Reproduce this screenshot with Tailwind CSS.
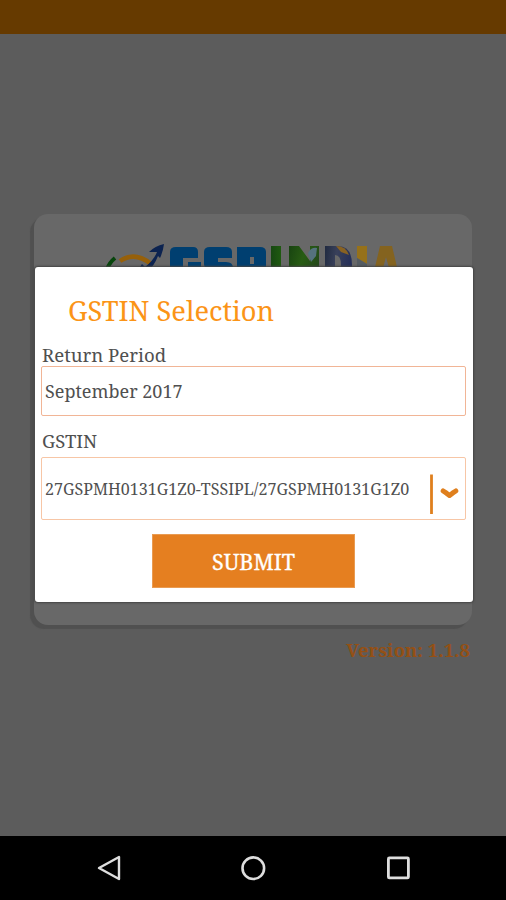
<!DOCTYPE html>
<html lang="en">
<head>
<meta charset="utf-8">
<title>GSTIN Selection</title>
<script src="https://cdn.jsdelivr.net/npm/@tailwindcss/browser@4"></script>
</head>
<body class="relative flex h-[900px] w-[506px] flex-col overflow-hidden bg-[#5c5c5c] font-['Noto_Serif','Droid_Serif','DejaVu_Serif_Condensed','DejaVu_Serif',serif]">
<header class="h-[34px] shrink-0 bg-[#663a00]"></header>
<main class="flex-1 pt-[180px] pl-[34px]">
  <section class="h-[411px] w-[438px] rounded-[14px] bg-[#686868] pt-[28px] pl-[66px] shadow-[-4px_4px_1px_#505050]">
    <svg width="310" height="50" viewBox="100 242 310 50" role="img" aria-label="GSP India">
      <defs>
        <linearGradient id="i1" x1="0" x2="1"><stop offset="0" stop-color="#174812"/><stop offset="1" stop-color="#1f5a10"/></linearGradient>
        <linearGradient id="n" x1="0" y1="0" x2="1" y2=".4"><stop offset="0" stop-color="#184311"/><stop offset=".5" stop-color="#285c13"/><stop offset="1" stop-color="#24491b"/></linearGradient>
        <linearGradient id="d" x1="0" y1="0" x2="1" y2=".2"><stop offset="0" stop-color="#202a40"/><stop offset=".45" stop-color="#39405a"/><stop offset="1" stop-color="#252f59"/></linearGradient>
      </defs>
      <path d="M107 269Q110 262 115 258" fill="none" stroke="#07450c" stroke-width="4"/>
      <path d="M120 261Q135 251 151 264" fill="none" stroke="#96600a" stroke-width="4.5"/>
      <path d="M138 270L142 264L145 267Q154 260 157 252L149 252Q155 246 164 244Q163 252 160 258L158 256Q154 266 148 271Z" fill="#0c2350"/>
      <g fill="#003f70">
        <path d="M170 283V252Q170 247 176 247H193Q198 247 198 252V258H183V283ZM188 262H201V283H188Z"/>
        <path d="M204 264V252Q204 247 210 247H226Q232 247 232 252V258H218V262H226Q233 262 233 268V283H204V275H220V269H210Q204 269 204 264Z"/>
        <path d="M237 283V247H260Q266 247 266 252V266Q266 273 260 273H250V283ZM250 257V264H254V257Z" fill-rule="evenodd"/>
      </g>
      <g>
        <path d="M271 246h10v38h-10z" fill="url(#i1)"/>
        <path d="M289 246h10l11 15v-15h9v38h-9l-12-16v16h-9z" fill="url(#n)"/>
        <path d="M308 253q3-6 9-5l-1 8-5 6z" fill="#55727e"/>
        <path d="M325 246h13q14 0 14 19t-14 19h-13zm10 9v20q6 0 6-10t-6-10z" fill="url(#d)" fill-rule="evenodd"/>
        <path d="M336 246q10 0 13 9l-8-3z" fill="#886222"/>
        <path d="M357 246h10v18l-10-6z" fill="#96711a"/>
        <path d="M357 258l10 6v20h-10z" fill="#555c62"/>
        <path d="M380 246h12l9 38h-10l-2-8h-6l-2 8h-10zm6 11l-3 11h6z" fill="#84631f" fill-rule="evenodd"/>
      </g>
    </svg>
  </section>
  <p class="mt-[14px] w-[436px] text-right text-[18.5px] leading-[22px] font-bold whitespace-nowrap text-[#945015]">Version: 1.1.8</p>
</main>
<nav class="flex h-[64px] shrink-0 items-center justify-between bg-black px-[96px]" aria-label="System navigation">
  <svg width="26" height="30" viewBox="0 0 26 30" fill="none" stroke="#dedede" stroke-width="2.4"><path d="M3 15L23 4V26Z" stroke-linejoin="round"/></svg>
  <svg width="26" height="30" viewBox="0 0 26 30" fill="none" stroke="#dedede" stroke-width="2.6"><circle cx="13.3" cy="15.2" r="10.8"/></svg>
  <svg width="26" height="30" viewBox="0 0 26 30" fill="none" stroke="#dedede" stroke-width="2.8"><rect x="4.4" y="4.9" width="20" height="20" rx="1"/></svg>
</nav>
<div class="absolute top-[267px] left-[35px] flex h-[335px] w-[438px] flex-col rounded-[3px] bg-white px-[6px] text-[#505050] shadow-[0_0_2px_1px_#444]" role="dialog">
  <h1 class="mt-[28px] ml-[27px] h-[32px] text-[27.3px] leading-[32px] whitespace-nowrap text-[#fb9417]">GSTIN Selection</h1>
  <label class="mt-[17px] ml-px h-[22px] text-[18.6px] leading-[22px] whitespace-nowrap">Return Period</label>
  <div class="flex h-[50px] w-[425px] items-center rounded-[2px] border border-[#f1b596] pt-px pl-[3px] text-[18px] whitespace-nowrap">September 2017</div>
  <label class="mt-[14px] ml-px h-[22px] text-[18.5px] leading-[22px] whitespace-nowrap">GSTIN</label>
  <div class="mt-[5px] flex h-[63px] w-[425px] items-center rounded-[2px] border border-[#f7c6a6] pt-px pl-[3px] whitespace-nowrap">
    <span class="w-[384px] text-[16.1px]">27GSPMH0131G1Z0-TSSIPL/27GSPMH0131G1Z0</span>
    <svg class="shrink-0" width="34" height="54" viewBox="0 0 34 54" fill="none" stroke="#df7f1d"><path d="M2.500 12.500V52" stroke-width="2.800"/><path d="M14.200 29L17.500 31.200L20.500 33.500L23.500 31.200L26.800 29" stroke-width="5" stroke-linecap="round" stroke-linejoin="round"/></svg>
  </div>
  <button class="mt-[14px] ml-[111px] h-[54px] w-[203px] border border-[#e99b52] bg-[#e57f20] pt-[3px] text-[21.6px] whitespace-nowrap text-white [-webkit-text-stroke:0.3px_white]">SUBMIT</button>
</div>
</body>
</html>
